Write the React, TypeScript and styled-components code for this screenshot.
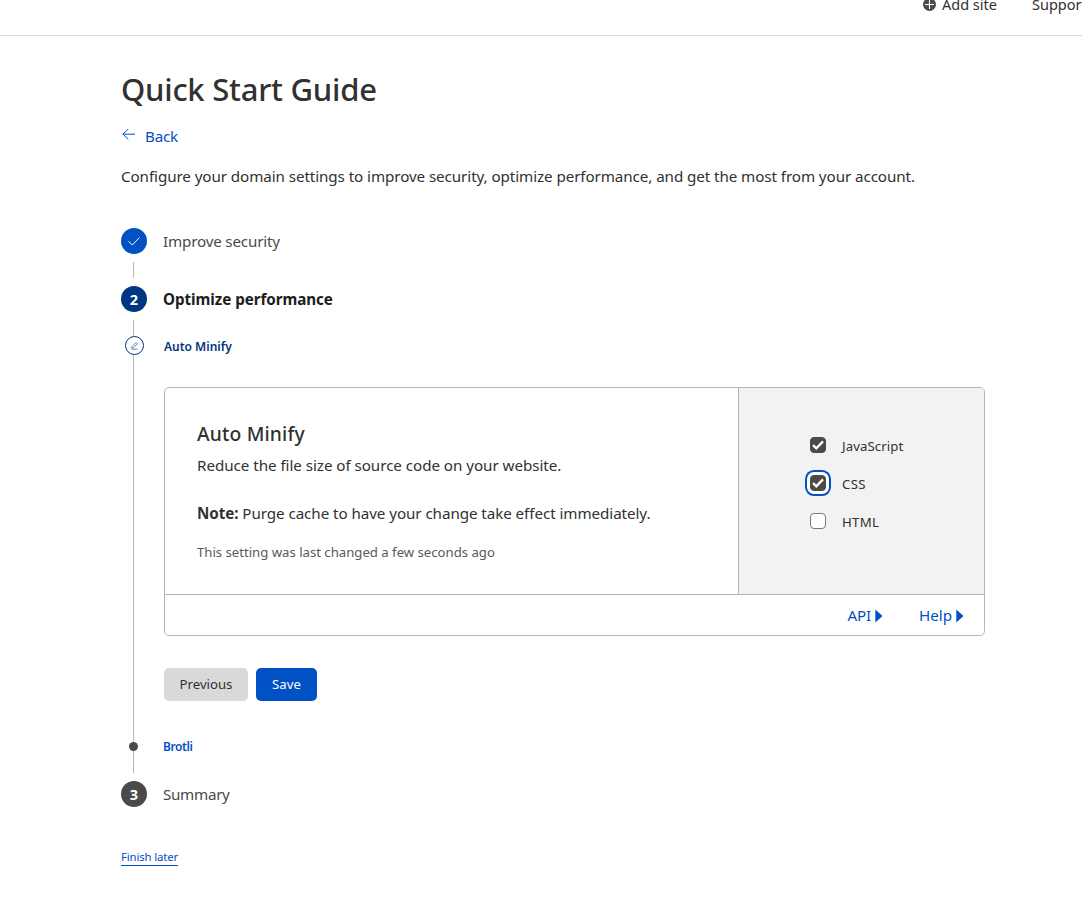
import React from "react";
import styled, { createGlobalStyle } from "styled-components";

const GlobalStyle = createGlobalStyle`
  * { box-sizing: border-box; }
  body {
    margin: 0;
    background: #fff;
    color: #313131;
    font-family: "Noto Sans", "Open Sans", sans-serif;
    font-size: 15.2px;
    line-height: 24px;
    overflow: hidden;
  }
  h1, h2, p { margin: 0; }
`;

const Label = styled.span<{ $track?: number }>`
  letter-spacing: ${(p) => p.$track ?? 0}px;
  white-space: nowrap;
`;

const Header = styled.header`
  height: 36px;
  border-bottom: 1px solid #d9d9d9;
  padding-left: 923px;
  display: flex;
  gap: 35px;
  align-items: flex-start;
  overflow: hidden;
`;

const HeaderItem = styled.a`
  display: flex;
  align-items: center;
  gap: 6px;
  margin-top: -8px;
  font-size: 14.5px;
  flex-shrink: 0;
`;

const Main = styled.main`
  width: 864px;
  margin-left: 121px;
  padding-top: 33px;
`;

const Title = styled.h1`
  font-size: 31px;
  line-height: 40px;
  font-weight: 500;
`;

const BackLink = styled.a`
  display: flex;
  gap: 9px;
  margin-top: 15px;
  color: #0051c3;
  svg { margin-top: 3px; }
`;

const Intro = styled.p`
  margin-top: 16px;
  height: 24px;
`;

const Steps = styled.div`
  margin-top: 40px;
`;

const Step = styled.div<{ $active?: boolean }>`
  display: flex;
  align-items: center;
  gap: 16px;
  height: 26px;
  color: ${(p) => (p.$active ? "#1d1d1d" : "#4a4a4a")};
  font-weight: ${(p) => (p.$active ? 700 : 400)};
`;

const StepBadge = styled.span<{ $color: string }>`
  width: 26px;
  height: 26px;
  border-radius: 50%;
  background: ${(p) => p.$color};
  color: #fff;
  font-weight: 700;
  font-size: 14.5px;
  display: flex;
  align-items: center;
  justify-content: center;
`;

const Connector = styled.div`
  width: 1px;
  height: 16px;
  margin: 8px 0 8px 12px;
  background: #b6b6b6;
`;

const SubSteps = styled.div`
  margin: 8px 0 8px 12px;
  height: 453px;
  border-left: 1px solid #b6b6b6;
  padding-top: 16px;
`;

const SubStep = styled.div<{ $color: string }>`
  display: flex;
  align-items: center;
  height: 19px;
  color: ${(p) => p.$color};
  font-size: 12px;
  font-weight: 600;
`;

const EditMarker = styled.span`
  width: 19px;
  height: 19px;
  margin: 0 20px 0 -9px;
  border: 1px solid #003681;
  border-radius: 50%;
  background: #fff;
  display: flex;
  align-items: center;
  justify-content: center;
  & + span { padding-top: 2px; }
`;

const DotMarker = styled.span`
  width: 9px;
  height: 9px;
  margin: 0 25px 0 -5px;
  border-radius: 50%;
  background: #4a4a4a;
`;

const Panel = styled.div`
  margin: 32px 0 0 30px;
`;

const Card = styled.section`
  width: 821px;
  height: 249px;
  border: 1px solid #b6b6b6;
  border-radius: 5px;
  overflow: hidden;
`;

const CardBody = styled.div`
  display: flex;
  height: 207px;
  border-bottom: 1px solid #b6b6b6;
`;

const CardText = styled.div`
  width: 573px;
  padding: 31px 32px 0;
`;

const CardTitle = styled.h2`
  font-size: 19.3px;
  line-height: 30px;
  font-weight: 500;
`;

const Line = styled.p<{ $top: number }>`
  margin-top: ${(p) => p.$top}px;
  height: 24px;
`;

const Muted = styled(Line)`
  color: #595959;
  font-size: 13.2px;
`;

const Options = styled.div`
  flex: 1;
  border-left: 1px solid #b6b6b6;
  background: #f2f2f2;
  padding: 38px 0 0 71px;
`;

const Option = styled.label`
  display: flex;
  align-items: center;
  gap: 16px;
  height: 38px;
  font-size: 13.2px;
  span { padding-top: 2px; }
`;

const Box = styled.i<{ $checked?: boolean; $focused?: boolean }>`
  width: 16px;
  height: 16px;
  border: 1px solid ${(p) => (p.$checked ? "#4a4a4a" : "#797979")};
  border-radius: 4px;
  background: ${(p) => (p.$checked ? "#4a4a4a" : "#fff")};
  box-shadow: ${(p) => (p.$focused ? "0 0 0 3px #fff, 0 0 0 5px #0051c3" : "none")};
  display: flex;
  align-items: center;
  justify-content: center;
`;

const CardFooter = styled.div`
  display: flex;
  justify-content: flex-end;
  align-items: center;
  gap: 36px;
  height: 40px;
  padding-right: 20px;
`;

const FooterLink = styled.a`
  display: flex;
  align-items: center;
  gap: 4px;
  color: #0051c3;
  svg { margin-top: 2px; }
`;

const Actions = styled.div`
  display: flex;
  gap: 8px;
  margin: 32px 0 36px;
`;

const Button = styled.button<{ $primary?: boolean }>`
  width: ${(p) => (p.$primary ? 61 : 84)}px;
  height: 33px;
  padding: 0 0 2px;
  border: 0;
  border-radius: 5px;
  background: ${(p) => (p.$primary ? "#0051c3" : "#d9d9d9")};
  color: ${(p) => (p.$primary ? "#fff" : "#313131")};
  font-family: inherit;
  font-size: 13.2px;
`;

const FinishLink = styled.a`
  display: inline-block;
  margin-top: 42px;
  height: 17px;
  line-height: 16px;
  color: #0051c3;
  border-bottom: 1px solid #0051c3;
  font-size: 11.4px;
`;

const PlusIcon = () => (
  <svg width="13" height="13" viewBox="0 0 13 13">
    <circle cx="6.5" cy="6.5" r="6.5" fill="#4a4a4a" />
    <path d="M6.5 2v9M2 6.5h9" stroke="#fff" strokeWidth="1.1" />
  </svg>
);

const ArrowIcon = () => (
  <svg width="15" height="14" viewBox="0 0 15 14" fill="none" stroke="#0051c3" strokeWidth="1">
    <path d="M14 7.2H2M7.2 2L2 7.2l5.2 5.2" />
  </svg>
);

const StepCheckIcon = () => (
  <svg width="14" height="12" viewBox="0 0 14 12" fill="none" stroke="#fff" strokeWidth="1">
    <path d="M1.5 6.2l3.8 3.8 7.2-7.5" />
  </svg>
);

const PencilIcon = () => (
  <svg width="9" height="9" viewBox="0 0 9 9" fill="none" stroke="#003681" strokeWidth=".6">
    <path d="M2 5.6L6 1.6l1.3 1.3-4 4-1.8.4zM2 8.2h5.5" />
  </svg>
);

const BoxCheckIcon = () => (
  <svg width="14" height="14" viewBox="0 0 14 14" fill="none" stroke="#fff" strokeWidth="2.3">
    <path d="M2 7.2l3.3 3.2L12 3.4" />
  </svg>
);

const CaretIcon = () => (
  <svg width="8" height="14" viewBox="0 0 8 14">
    <path d="M0.3 0.5L7.5 7 0.3 13.5z" fill="#0051c3" />
  </svg>
);

export default function App() {
  return (
    <>
      <GlobalStyle />
      <Header>
        <HeaderItem><PlusIcon /><Label>Add site</Label></HeaderItem>
        <HeaderItem><Label>Support</Label></HeaderItem>
      </Header>
      <Main>
        <Title><Label $track={-0.24}>Quick Start Guide</Label></Title>
        <BackLink><ArrowIcon /><Label $track={-0.2}>Back</Label></BackLink>
        <Intro>
          <Label $track={-0.083}>Configure your domain settings to improve security, optimize performance, and get the most from your account.</Label>
        </Intro>
        <Steps>
          <Step>
            <StepBadge $color="#0051c3"><StepCheckIcon /></StepBadge>
            <Label $track={-0.18}>Improve security</Label>
          </Step>
          <Connector />
          <Step $active>
            <StepBadge $color="#003681">2</StepBadge>
            <Label $track={-0.05}>Optimize performance</Label>
          </Step>
          <SubSteps>
            <SubStep $color="#003681">
              <EditMarker><PencilIcon /></EditMarker>
              <Label>Auto Minify</Label>
            </SubStep>
            <Panel>
              <Card>
                <CardBody>
                  <CardText>
                    <CardTitle><Label $track={0.15}>Auto Minify</Label></CardTitle>
                    <Line $top={4}><Label $track={-0.05}>Reduce the file size of source code on your website.</Label></Line>
                    <Line $top={24}><Label $track={-0.07}><b>Note:</b> Purge cache to have your change take effect immediately.</Label></Line>
                    <Muted $top={15}><Label $track={-0.02}>This setting was last changed a few seconds ago</Label></Muted>
                  </CardText>
                  <Options>
                    <Option><Box $checked><BoxCheckIcon /></Box><Label $track={0.1}>JavaScript</Label></Option>
                    <Option><Box $checked $focused><BoxCheckIcon /></Box><Label $track={0.3}>CSS</Label></Option>
                    <Option><Box /><Label $track={0.3}>HTML</Label></Option>
                  </Options>
                </CardBody>
                <CardFooter>
                  <FooterLink><Label $track={-0.2}>API</Label><CaretIcon /></FooterLink>
                  <FooterLink><Label>Help</Label><CaretIcon /></FooterLink>
                </CardFooter>
              </Card>
              <Actions>
                <Button><Label>Previous</Label></Button>
                <Button $primary><Label>Save</Label></Button>
              </Actions>
            </Panel>
            <SubStep $color="#0051c3">
              <DotMarker />
              <Label $track={-0.4}>Brotli</Label>
            </SubStep>
          </SubSteps>
          <Step>
            <StepBadge $color="#4a4a4a">3</StepBadge>
            <Label $track={-0.3}>Summary</Label>
          </Step>
        </Steps>
        <FinishLink><Label $track={-0.14}>Finish later</Label></FinishLink>
      </Main>
    </>
  );
}
